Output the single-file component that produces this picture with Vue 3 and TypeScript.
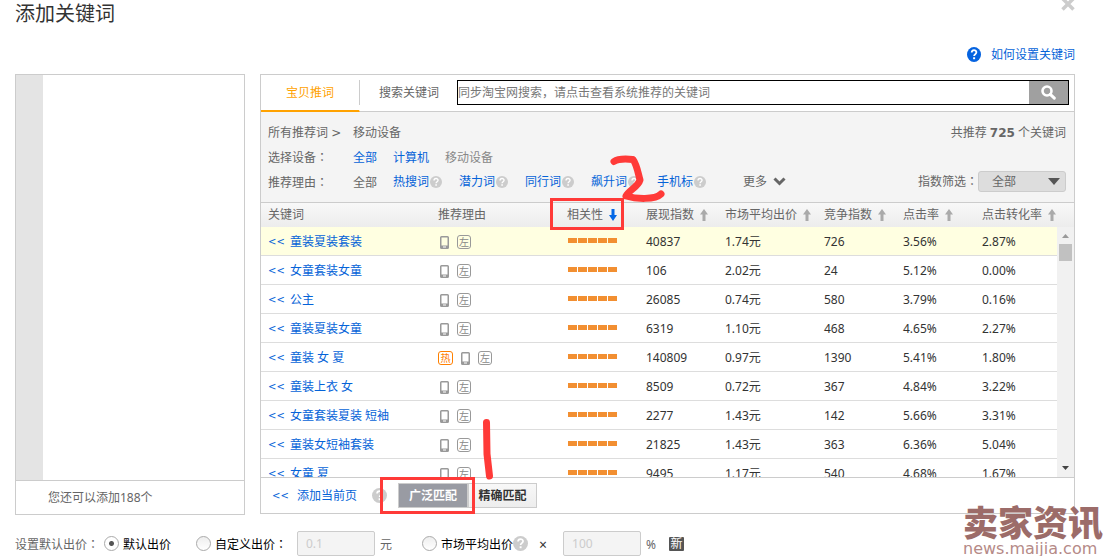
<script setup lang="ts">
import { ref } from 'vue'

interface Row {
  word: string
  hot?: boolean
  show: string
  price: string
  compete: string
  click: string
  convert: string
}

const rows: Row[] = [
  { word: '童装夏装套装', show: '40837', price: '1.74元', compete: '726', click: '3.56%', convert: '2.87%' },
  { word: '女童套装女童', show: '106', price: '2.02元', compete: '24', click: '5.12%', convert: '0.00%' },
  { word: '公主', show: '26085', price: '0.74元', compete: '580', click: '3.79%', convert: '0.16%' },
  { word: '童装夏装女童', show: '6319', price: '1.10元', compete: '468', click: '4.65%', convert: '2.27%' },
  { word: '童装 女 夏', hot: true, show: '140809', price: '0.97元', compete: '1390', click: '5.41%', convert: '1.80%' },
  { word: '童装上衣 女', show: '8509', price: '0.72元', compete: '367', click: '4.84%', convert: '3.22%' },
  { word: '女童套装夏装 短袖', show: '2277', price: '1.43元', compete: '142', click: '5.66%', convert: '3.31%' },
  { word: '童装女短袖套装', show: '21825', price: '1.43元', compete: '363', click: '6.36%', convert: '5.04%' },
  { word: '女童 夏', show: '9495', price: '1.17元', compete: '540', click: '4.68%', convert: '1.67%' },
]

const sortable = ['展现指数', '市场平均出价', '竞争指数', '点击率', '点击转化率']
const reasons = ['热搜词', '潜力词', '同行词', '飙升词', '手机标']

const query = ref('')
const level = ref('全部')
const bidMode = ref('default')
const customBid = ref('0.1')
const percent = ref('100')
</script>

<template>
  <main class="dialog">
    <header class="head">
      <h1>添加关键词</h1>
      <button class="close" type="button" aria-label="关闭">
        <svg width="14" height="14" viewBox="0 0 14 14"><path d="M1.500 1.500l11 11M12.500 1.500l-11 11" stroke="#ccc" stroke-width="3.500" /></svg>
      </button>
    </header>
    <div class="help">
      <svg width="14" height="15" viewBox="0 0 14 14" preserveAspectRatio="none">
        <circle cx="7" cy="7" r="7" fill="#0563e0" />
        <path d="M4.700 5.200c0-3 4.700-3 4.700-.2 0 1.700-2.300 1.700-2.300 3.400" fill="none" stroke="#fff" stroke-width="1.800" />
        <rect x="6.100" y="9.600" width="2" height="1.800" fill="#fff" />
      </svg>
      <a href="#">如何设置关键词</a>
    </div>

    <div class="panels">
      <section class="chosen">
        <div class="chosen-list"></div>
        <p class="chosen-foot">您还可以添加188个</p>
      </section>

      <section class="picker">
        <div class="tabs">
          <button class="tab active" type="button">宝贝推词</button>
          <button class="tab" type="button">搜索关键词</button>
          <form class="search" @submit.prevent>
            <input v-model="query" type="text" aria-label="搜索关键词" placeholder="同步淘宝网搜索，请点击查看系统推荐的关键词" />
            <button type="submit" aria-label="搜索">
              <svg width="15" height="15" viewBox="0 0 15 15"><circle cx="6" cy="6" r="4.500" fill="none" stroke="#fff" stroke-width="2.600" /><path d="M9.300 9.300l4 3.800" stroke="#fff" stroke-width="3" stroke-linecap="round" /></svg>
            </button>
          </form>
        </div>

        <div class="filters">
          <div class="line">
            <span class="label">所有推荐词 <span class="sep">&gt;</span></span>
            <span>移动设备</span>
            <span class="total">共推荐 <b>725</b> 个关键词</span>
          </div>
          <div class="line">
            <span class="label">选择设备<span lang="zh-TW" class="colon">：</span></span>
            <a href="#">全部</a>
            <a href="#">计算机</a>
            <span class="muted">移动设备</span>
          </div>
          <div class="line">
            <span class="label">推荐理由<span lang="zh-TW" class="colon">：</span></span>
            <span>全部</span>
            <span v-for="r in reasons" :key="r" class="reason">
              <a href="#">{{ r }}</a>
              <svg class="q" viewBox="0 0 14 14"><circle cx="7" cy="7" r="7" fill="#ccc" /><path d="M4.700 5.200c0-3 4.700-3 4.700-.2 0 1.700-2.300 1.700-2.300 3.400" fill="none" stroke="#fff" stroke-width="1.600" /><rect x="6.200" y="9.600" width="1.800" height="1.800" fill="#fff" /></svg>
            </span>
            <button class="more" type="button">
              更多
              <svg width="13" height="9" viewBox="0 0 13 9"><path d="M1.500 1.500l5 5 5-5" fill="none" stroke="#666" stroke-width="3" /></svg>
            </button>
            <label class="level">
              <span>指数筛选<span lang="zh-TW" class="colon">：</span></span>
              <span class="select">
                <select v-model="level"><option>全部</option></select>
                <svg width="12" height="7" viewBox="0 0 12 7"><path d="M0 0h12L6 7z" fill="#555" /></svg>
              </span>
            </label>
          </div>
        </div>

        <div class="scroller">
          <table>
            <colgroup>
              <col />
              <col class="c-reason" />
              <col class="c-std" />
              <col class="c-std" />
              <col class="c-price" />
              <col class="c-std" />
              <col class="c-std" />
              <col class="c-last" />
            </colgroup>
            <thead>
              <tr>
                <th>关键词</th>
                <th>推荐理由</th>
                <th class="rel">
                  <span class="sort">相关性<svg width="8" height="12" viewBox="0 0 8 12"><path d="M2.500 0h3v6H8l-4 6-4-6h2.500z" fill="#0568e6" /></svg></span>
                </th>
                <th v-for="s in sortable" :key="s">
                  <span class="sort">{{ s }}<svg width="8" height="12" viewBox="0 0 8 12"><path d="M2.500 12h3V5.500H8L4 0 0 5.500h2.500z" fill="#aaa" /></svg></span>
                </th>
              </tr>
            </thead>
            <tbody>
              <tr v-for="(row, i) in rows" :key="row.word" :class="{ lit: i === 0 }">
                <td><a class="word" href="#"><span class="chev">&lt;&lt;</span>{{ row.word }}</a></td>
                <td>
                  <span class="marks">
                    <span v-if="row.hot" class="mark hot">热</span>
                    <svg width="9" height="13" viewBox="0 0 9 13"><path d="M1.500 0h6Q9 0 9 1.500v10Q9 13 7.500 13h-6Q0 13 0 11.500v-10Q0 0 1.500 0zM1.500 1.500v8h6v-8z" fill="#999" fill-rule="evenodd" /><rect x="3" y="10.500" width="3" height="1" fill="#fff" /></svg>
                    <span class="mark">左</span>
                  </span>
                </td>
                <td class="rel"><span class="bars"><i v-for="n in 5" :key="n"></i></span></td>
                <td>{{ row.show }}</td>
                <td>{{ row.price }}</td>
                <td>{{ row.compete }}</td>
                <td>{{ row.click }}</td>
                <td>{{ row.convert }}</td>
              </tr>
            </tbody>
          </table>
          <div class="track">
            <svg width="7" height="4" viewBox="0 0 7 4"><path d="M0 4h7L3.500 0z" fill="#999" /></svg>
            <span class="thumb"></span>
            <svg class="down" width="7" height="4" viewBox="0 0 7 4"><path d="M0 0h7L3.500 4z" fill="#444" /></svg>
          </div>
        </div>

        <div class="actions">
          <a class="add" href="#"><span class="chev">&lt;&lt;</span>添加当前页</a>
          <svg class="q big" viewBox="0 0 14 14"><circle cx="7" cy="7" r="7" fill="#ccc" /><path d="M4.700 5.200c0-3 4.700-3 4.700-.2 0 1.700-2.300 1.700-2.300 3.400" fill="none" stroke="#fff" stroke-width="1.600" /><rect x="6.200" y="9.600" width="1.800" height="1.800" fill="#fff" /></svg>
          <div class="match">
            <button class="on" type="button">广泛匹配</button>
            <button type="button">精确匹配</button>
          </div>
        </div>
      </section>
    </div>

    <form class="bids" @submit.prevent>
      <span class="caption">设置默认出价<span lang="zh-TW" class="colon">：</span></span>
      <label class="choice first"><input v-model="bidMode" type="radio" name="bid" value="default" /><span>默认出价</span></label>
      <label class="choice second"><input v-model="bidMode" type="radio" name="bid" value="custom" /><span>自定义出价<span lang="zh-TW" class="colon">：</span></span></label>
      <input v-model="customBid" class="amount" type="text" aria-label="自定义出价" disabled />
      <span class="unit">元</span>
      <label class="choice third"><input v-model="bidMode" type="radio" name="bid" value="market" /><span>市场平均出价</span></label>
      <svg class="q big" viewBox="0 0 14 14"><circle cx="7" cy="7" r="7" fill="#ccc" /><path d="M4.700 5.200c0-3 4.700-3 4.700-.2 0 1.700-2.300 1.700-2.300 3.400" fill="none" stroke="#fff" stroke-width="1.600" /><rect x="6.200" y="9.600" width="1.800" height="1.800" fill="#fff" /></svg>
      <span class="times">×</span>
      <input v-model="percent" class="amount" type="text" aria-label="市场平均出价百分比" disabled />
      <span class="unit">%</span>
      <span class="new">新</span>
    </form>

    <svg class="notes" width="1105" height="556" viewBox="0 0 1105 556" fill="none" stroke="#ff3a38" aria-hidden="true">
      <rect x="551.500" y="199.500" width="71" height="29" stroke-width="3" />
      <rect x="381.500" y="478.500" width="92" height="34" stroke-width="3" />
      <path d="M614 161.500C619 158 628 159 633 159.500C637 165 638 173 640 180C638 187 629 190 626 196C636 199 655 200 661 194" stroke-width="7" stroke-linecap="round" stroke-linejoin="round" />
      <path d="M486.500 422.500L487 454L489.500 476" stroke-width="7" stroke-linecap="round" stroke-linejoin="round" />
    </svg>

    <div class="brand">
      <strong>卖家资讯</strong>
      <span>news.maijia.com</span>
    </div>
  </main>
</template>

<style>
body {
  margin: 0;
  background: #fff;
}
</style>

<style scoped>
* {
  box-sizing: border-box;
}
.dialog {
  position: relative;
  padding: 0 30px 0 15px;
  overflow: hidden;
  color: #666;
  font: 12px/18px "Noto Sans", "Noto Sans CJK SC", sans-serif;
}
a {
  color: #0563d8;
  text-decoration: none;
}
button,
input,
select {
  font: inherit;
  color: inherit;
  border: 0;
  padding: 0;
  margin: 0;
  background: none;
  border-radius: 0;
}
svg {
  display: block;
  flex: none;
}
.colon {
  font-family: "Noto Sans CJK TC", sans-serif;
  line-height: 1;
}
.sep {
  font-family: "DejaVu Sans", sans-serif;
  line-height: 1;
}
.chev {
  width: 17px;
  font-family: "DejaVu Sans", sans-serif;
  font-size: 10px;
}
.head {
  display: flex;
  justify-content: space-between;
  height: 44px;
}
h1 {
  margin: 0;
  color: #333;
  font-size: 20px;
  font-weight: 400;
  line-height: 28px;
}
.close {
  align-self: flex-start;
  margin-top: -3px;
}
.help {
  display: flex;
  align-items: center;
  justify-content: flex-end;
  gap: 10px;
  height: 20px;
  margin-bottom: 10px;
}
.help a {
  padding-top: 2px;
}
.panels {
  display: flex;
  align-items: flex-start;
  gap: 15px;
}
.chosen {
  flex: none;
  width: 230px;
  border: 1px solid #ccc;
}
.chosen-list {
  height: 405px;
  border-left: 27px solid #e4e4e4;
}
.chosen-foot {
  margin: 0;
  padding-left: 32px;
  border-top: 1px solid #ccc;
  line-height: 33px;
}
.picker {
  flex: 1;
  min-width: 0;
  border: 1px solid #ccc;
}
.tabs {
  display: flex;
  height: 37px;
  padding-right: 5px;
  border-bottom: 1px solid #ccc;
}
.tab {
  position: relative;
  flex: none;
  width: 98px;
}
.tab.active {
  width: 99px;
  height: 37px;
  color: #ffa200;
  border-right: 1px solid #fff;
  border-bottom: 2px solid #ffa200;
}
.tab.active::after {
  content: "";
  position: absolute;
  top: 5px;
  right: -1px;
  width: 1px;
  height: 25px;
  background: #ccc;
}
.search {
  display: flex;
  flex: 1;
  height: 25px;
  margin: 5px 0 0 -1px;
  border: 1px solid #000;
}
.search input {
  flex: 1;
  min-width: 0;
  outline: 0;
}
.search input::placeholder {
  color: #777;
  opacity: 1;
}
.search button {
  display: flex;
  align-items: center;
  justify-content: center;
  width: 39px;
  background: #a0a0a0;
}
.filters {
  padding: 8px 8px 7px 7px;
  background: #f4f4f4;
}
.line {
  display: flex;
  align-items: center;
  gap: 16px;
  height: 25px;
}
.label {
  width: 69px;
  white-space: nowrap;
}
.muted {
  color: #888;
}
.total {
  margin-left: auto;
}
.total b {
  font-family: "DejaVu Sans", sans-serif;
  line-height: 1;
}
.reason {
  display: flex;
  align-items: center;
  gap: 1px;
  margin-right: 1px;
  padding-bottom: 2px;
}
.q {
  width: 12px;
  height: 12px;
}
.q.big {
  width: 15px;
  height: 15px;
}
.more {
  display: flex;
  align-items: center;
  gap: 6px;
  margin-left: 20px;
  padding-bottom: 2px;
}
.level {
  display: flex;
  align-items: center;
  margin-left: auto;
  padding-bottom: 2px;
}
.select {
  display: flex;
  align-items: center;
  position: relative;
}
select {
  appearance: none;
  width: 88px;
  height: 21px;
  padding-left: 13px;
  background: #ddd;
  border: 1px solid #ccc;
  border-radius: 3px;
}
.select svg {
  position: absolute;
  right: 6px;
  pointer-events: none;
}
.scroller {
  position: relative;
  height: 275px;
  overflow: hidden;
  border-top: 1px solid #ccc;
}
table {
  width: 100%;
  table-layout: fixed;
  border-collapse: separate;
  border-spacing: 0;
}
.c-reason {
  width: 129px;
}
.c-std {
  width: 79px;
}
.c-price {
  width: 99px;
}
.c-last {
  width: 99px;
}
th,
td {
  padding: 0 0 0 7px;
  text-align: left;
  font-weight: 400;
  white-space: nowrap;
}
th {
  height: 24px;
}
thead tr {
  background: linear-gradient(#f8f8f8, #ececec);
}
td {
  height: 29px;
  padding-top: 2px;
  color: #333;
  border-bottom: 1px solid #ddd;
}
.lit {
  background: #ffffe1;
}
.sort {
  display: flex;
  align-items: center;
  gap: 6px;
}
.word {
  display: flex;
  gap: 5px;
}
.marks {
  display: flex;
  align-items: center;
  gap: 8px;
  padding-left: 2px;
}
.mark {
  width: 14px;
  height: 14px;
  border: 1px solid #999;
  border-radius: 3px;
  color: #888;
  font-size: 10px;
  line-height: 12px;
  text-align: center;
}
.mark.hot {
  width: 15px;
  margin-left: -2px;
  color: #ff8000;
  border-color: #ff8000;
}
.bars {
  display: flex;
  gap: 1px;
  padding: 0 0 4px 1px;
}
.bars i {
  width: 9px;
  height: 5px;
  background: #f28f31;
}
.track {
  position: absolute;
  top: 24px;
  right: 0;
  bottom: 0;
  display: flex;
  flex-direction: column;
  align-items: center;
  gap: 6px;
  width: 17px;
  padding: 7px 0;
  background: #f1f1f1;
}
.thumb {
  width: 13px;
  height: 17px;
  background: #c1c1c1;
}
.down {
  margin-top: auto;
}
.actions {
  display: flex;
  align-items: center;
  height: 36px;
  padding-left: 11px;
  border-top: 1px solid #ccc;
}
.add {
  display: flex;
  gap: 8px;
  margin-right: 15px;
}
.match {
  display: flex;
  margin-left: 11px;
}
.match button {
  width: 69px;
  height: 25px;
  color: #333;
  font-weight: 700;
  background: linear-gradient(#f8f8f8, #ededed);
  border: 1px solid #ccc;
}
.match .on {
  width: 70px;
  color: #fff;
  background: #999ba3;
}
.bids {
  display: flex;
  align-items: center;
  height: 26px;
  margin-top: 15px;
}
.bids > .caption,
.bids > .unit,
.bids > .times,
.choice > span {
  padding-top: 3px;
}
.caption {
  width: 89px;
}
.choice {
  display: flex;
  align-items: center;
  gap: 4px;
  color: #000;
  white-space: nowrap;
}
.choice.first {
  width: 92px;
}
.choice.second {
  width: 101px;
}
.choice.third {
  margin-left: 30px;
}
.choice input {
  appearance: none;
  width: 15px;
  height: 15px;
  border: 1px solid #aaa;
  border-radius: 50%;
  background: linear-gradient(#eee, #fff);
}
.choice input:checked {
  background: radial-gradient(circle, #555 2px, #fff 3px);
}
.amount {
  width: 78px;
  height: 25px;
  padding-left: 8px;
  color: #ccc;
  background: #f4f4f4;
  border: 1px solid #ccc;
  border-radius: 2px;
}
.unit {
  margin-left: 5px;
}
.times {
  width: 35px;
  padding-left: 11px;
  color: #333;
  font-size: 14px;
}
.new {
  width: 15px;
  height: 14px;
  margin: 2px 0 0 13px;
  color: #fff;
  background: #555;
  border-radius: 1px;
  line-height: 14px;
  text-align: center;
}
.notes {
  position: absolute;
  top: 0;
  left: 0;
  pointer-events: none;
}
.brand {
  position: absolute;
  right: 2px;
  bottom: -1px;
  display: flex;
  flex-direction: column;
  gap: 3px;
  color: #9c6c69;
  pointer-events: none;
}
.brand strong {
  font: 900 35px/32px "Noto Sans CJK SC", sans-serif;
}
.brand span {
  color: #b58a87;
  font: 16px/17px "DejaVu Sans", sans-serif;
}
</style>
